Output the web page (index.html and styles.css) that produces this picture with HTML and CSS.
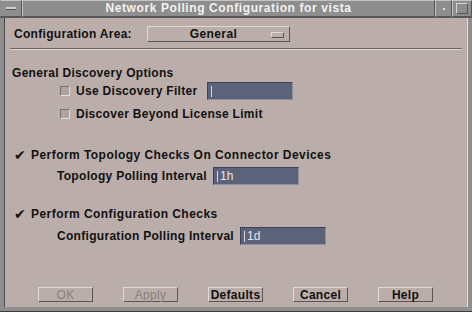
FILE: index.html
```html
<!DOCTYPE html>
<html lang="en">
<head>
    <meta charset="UTF-8">
    <title>Network Polling Configuration for vista</title>
    <link rel="stylesheet" href="styles.css">
</head>
<body>
    <div class="window">
        <!-- Window manager title bar -->
        <div class="titlebar">
            <div class="tb-btn menu"><span class="menu-bar"></span></div>
            <div class="title">Network Polling Configuration for vista</div>
            <div class="tb-btn min"><span class="min-dot"></span></div>
            <div class="tb-btn max"><span class="max-box"></span></div>
        </div>

        <div class="dialog">
            <div class="row area-row">
                <span class="label area-label">Configuration Area:</span>
                <div class="option-btn">
                    <span>General</span>
                    <span class="option-ind"></span>
                </div>
            </div>

            <div class="separator"></div>

            <div class="row heading">General Discovery Options</div>

            <div class="row indent-2 first-opt">
                <span class="toggle"></span>
                <span class="label">Use Discovery Filter</span>
                <div class="field filter-field"><span class="caret"></span></div>
            </div>
            <div class="row indent-2 second-opt">
                <span class="toggle"></span>
                <span class="label">Discover Beyond License Limit</span>
            </div>

            <div class="row indent-1 topo-check">
                <span class="check">&#10004;</span>
                <span class="label wide">Perform Topology Checks On Connector Devices</span>
            </div>
            <div class="row indent-3 topo-interval">
                <span class="label">Topology Polling Interval</span>
                <div class="field"><span class="caret"></span>1h</div>
            </div>

            <div class="row indent-1 config-check">
                <span class="check">&#10004;</span>
                <span class="label wide">Perform Configuration Checks</span>
            </div>
            <div class="row indent-3 config-interval">
                <span class="label">Configuration Polling Interval</span>
                <div class="field"><span class="caret"></span>1d</div>
            </div>

            <div class="buttons">
                <div class="push disabled">OK</div>
                <div class="push disabled">Apply</div>
                <div class="push">Defaults</div>
                <div class="push">Cancel</div>
                <div class="push">Help</div>
            </div>
        </div>
    </div>
</body>
</html>
```

FILE: styles.css
```css
html, body {
    margin: 0;
    padding: 0;
    background-color: #8c8c8c;
    font-family: "Liberation Sans", Arial, sans-serif;
    font-size: 12px;
    font-weight: bold;
    color: #111111;
}

.window {
    width: 472px;
    height: 312px;
    box-sizing: border-box;
    background-color: #8e8e8e;
    padding: 0 4px 4px 4px;
    display: flex;
    flex-direction: column;
    border-bottom: 1px solid #3c3c3c;
}

/* title bar */
.titlebar {
    height: 17px;
    display: flex;
    align-items: stretch;
    border-bottom: 1px solid #5a5a5a;
    margin: 0 -4px;
}

.tb-btn {
    width: 17px;
    box-sizing: border-box;
    border: 1px solid #c4c4c4;
    border-right-color: #555555;
    border-bottom-color: #555555;
    display: flex;
    align-items: center;
    justify-content: center;
}

.menu {
    width: 22px;
    border-left-color: #8e8e8e;
}

.menu-bar {
    width: 10px;
    height: 2px;
    background-color: #d0d0d0;
    border-bottom: 1px solid #555;
}

.min-dot {
    width: 2px;
    height: 2px;
    background-color: #e0e0e0;
}

.max {
    width: 20px;
}

.max-box {
    width: 10px;
    height: 9px;
    border: 1px solid #d8d8d8;
    border-right-color: #555;
    border-bottom-color: #555;
}

.title {
    flex: 1;
    text-align: center;
    color: #f2f2f2;
    font-size: 12px;
    line-height: 15px;
    letter-spacing: 0.6px;
    border: 1px solid #c4c4c4;
    border-right-color: #555555;
    border-bottom-color: #555555;
}

/* dialog body */
.dialog {
    flex: 1;
    background-color: #bbaeaa;
    display: flex;
    flex-direction: column;
    border-left: 1px solid #4a4a4a;
    border-right: 1px solid #e0e0e0;
}

.row {
    height: 18px;
    display: flex;
    align-items: center;
    flex-shrink: 0;
}

.label {
    letter-spacing: 0.3px;
    white-space: nowrap;
}

.label.wide {
    letter-spacing: 0.45px;
}

.area-row {
    margin-top: 7px;
    padding-left: 9px;
}

.area-label {
    width: 133px;
}

.option-btn {
    width: 143px;
    height: 16px;
    box-sizing: border-box;
    border: 1px solid #e2d8d4;
    border-right-color: #5e5450;
    border-bottom-color: #5e5450;
    display: flex;
    align-items: center;
    justify-content: center;
    position: relative;
    letter-spacing: 0.4px;
    padding-right: 10px;
}

.option-ind {
    position: absolute;
    right: 5px;
    top: 5px;
    width: 11px;
    height: 4px;
    border: 1px solid #e2d8d4;
    border-right-color: #5e5450;
    border-bottom-color: #5e5450;
}

.separator {
    margin: 5px 5px 0 5px;
    height: 0;
    border-top: 1px solid #6e6460;
    border-bottom: 1px solid #ded4d0;
}

.heading {
    margin-top: 14px;
    padding-left: 7px;
    letter-spacing: 0.3px;
}

.indent-1 {
    padding-left: 9px;
}

.indent-2 {
    padding-left: 55px;
}

.indent-3 {
    padding-left: 52px;
}

.first-opt {
    margin-top: 0;
}

.second-opt {
    margin-top: 5px;
}

.topo-check {
    margin-top: 23px;
}

.topo-interval {
    margin-top: 3px;
}

.config-check {
    margin-top: 20px;
}

.config-interval {
    margin-top: 4px;
}

/* toggles */
.toggle {
    width: 10px;
    height: 10px;
    box-sizing: border-box;
    border: 1px solid #7a706c;
    border-right-color: #e6dcd8;
    border-bottom-color: #e6dcd8;
    background-color: #b0a4a0;
    margin-right: 6px;
}

.check {
    width: 13px;
    font-size: 14px;
    font-family: "DejaVu Sans", sans-serif;
    color: #111;
    margin-right: 4px;
}

/* text fields */
.field {
    width: 86px;
    height: 18px;
    box-sizing: border-box;
    margin-left: 6px;
    background-color: #5c6279;
    border: 1px solid #3e4256;
    border-right-color: #8a90a4;
    border-bottom-color: #8a90a4;
    color: #e4e4ec;
    font-weight: normal;
    font-size: 12px;
    display: flex;
    align-items: center;
    padding-left: 3px;
}

.filter-field {
    margin-left: 10px;
}

.caret {
    width: 1px;
    height: 11px;
    background-color: #d8d8e0;
    margin-right: 2px;
}

/* push buttons */
.buttons {
    margin-top: auto;
    margin-bottom: 5px;
    padding-left: 33px;
    display: flex;
    gap: 30px;
}

.push {
    width: 55px;
    height: 15px;
    box-sizing: border-box;
    border: 1px solid #e2d8d4;
    border-right-color: #5e5450;
    border-bottom-color: #5e5450;
    display: flex;
    align-items: center;
    justify-content: center;
    letter-spacing: 0.3px;
}

.disabled {
    color: #8a807c;
    font-weight: normal;
}
```
